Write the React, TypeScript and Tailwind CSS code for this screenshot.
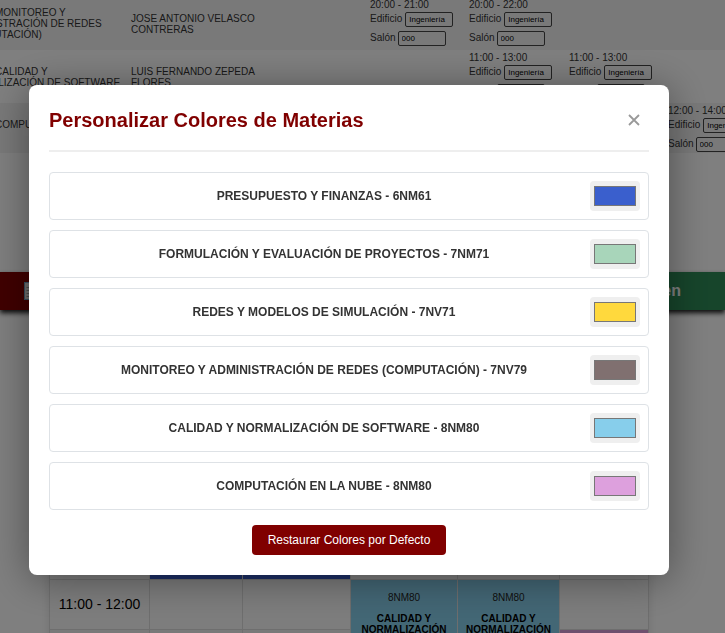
import { useState } from "react";

type Slot = { time: string } | null;

type Course = {
  title: string[];
  teacher: string;
  slots: Slot[];
};

const courses: Course[] = [
  {
    title: ["MONITOREO Y", "ADMINISTRACIÓN DE REDES", "(COMPUTACIÓN)"],
    teacher: "JOSE ANTONIO VELASCO CONTRERAS",
    slots: [{ time: "20:00 - 21:00" }, { time: "20:00 - 22:00" }, null, null],
  },
  {
    title: ["CALIDAD Y", "NORMALIZACIÓN DE SOFTWARE"],
    teacher: "LUIS FERNANDO ZEPEDA FLORES",
    slots: [null, { time: "11:00 - 13:00" }, { time: "11:00 - 13:00" }, null],
  },
  {
    title: ["COMPUTACIÓN EN LA NUBE"],
    teacher: "",
    slots: [null, null, null, { time: "12:00 - 14:00" }],
  },
];

const subjects = [
  { name: "PRESUPUESTO Y FINANZAS - 6NM61", color: "#3a5fcd" },
  { name: "FORMULACIÓN Y EVALUACIÓN DE PROYECTOS - 7NM71", color: "#a8d5ba" },
  { name: "REDES Y MODELOS DE SIMULACIÓN - 7NV71", color: "#ffd93d" },
  { name: "MONITOREO Y ADMINISTRACIÓN DE REDES (COMPUTACIÓN) - 7NV79", color: "#807070" },
  { name: "CALIDAD Y NORMALIZACIÓN DE SOFTWARE - 8NM80", color: "#87ceeb" },
  { name: "COMPUTACIÓN EN LA NUBE - 8NM80", color: "#dda0dd" },
];

function SlotCell({ slot }: { slot: Slot }) {
  if (!slot) return <td />;
  const field = "h-[15px] w-12 rounded-xs border border-[#444] px-[3px] text-[8px] text-black";
  return (
    <td className="p-0 pt-px align-top">
      <div className="h-[14px] leading-[14px]">{slot.time}</div>
      <label className="flex h-[15px] items-start gap-[3px] leading-[13px] whitespace-nowrap">
        Edificio
        <input className={field} defaultValue="Ingeniería" />
      </label>
      <label className="mt-1 flex h-[15px] items-start gap-0.5 leading-[13px] whitespace-nowrap">
        Salón
        <input className={field} defaultValue="000" />
      </label>
    </td>
  );
}

function CourseTable() {
  return (
    <table className="-mt-[3px] -ml-[39px] w-[907px] table-fixed border-collapse text-[10px] leading-[11px] text-[#333]">
      <colgroup>
        <col className="w-[170px]" />
        <col className="w-[239px]" />
        <col className="w-[99px]" />
        <col className="w-[100px]" />
        <col className="w-[99px]" />
        <col />
      </colgroup>
      <tbody>
        {courses.map((course, i) => (
          <tr
            key={i}
            className={
              i === 2 ? "h-[50px] bg-[#f2f2f2]" : i === 0 ? "h-[53px] bg-[#f2f2f2]" : "h-[53px]"
            }
          >
            <td className={`p-0 indent-[34px] whitespace-nowrap ${i === 2 ? "pt-4 align-top" : ""}`}>
              {course.title.map((line, n) => (
                <div key={line} className={n === 0 ? "" : "indent-0"}>
                  {line}
                </div>
              ))}
            </td>
            <td className="p-0 pr-[110px]">{course.teacher}</td>
            {course.slots.map((slot, n) => (
              <SlotCell key={n} slot={slot} />
            ))}
          </tr>
        ))}
      </tbody>
    </table>
  );
}

function WeekTable() {
  const cell = "border border-[#ddd] p-0";
  const classCell = "border border-[#ddd] bg-[#87ceeb] p-0 pt-3 align-top text-[10px] leading-[11px] text-[#222]";
  return (
    <table className="mt-[219px] ml-[49px] w-[600px] table-fixed border-collapse bg-[#fafafa] text-center shadow-[0_0_10px_rgba(0,0,0,0.1)]">
      <colgroup>
        <col className="w-[100px]" />
        <col className="w-[93px]" />
        <col className="w-[108px]" />
        <col className="w-[107px]" />
        <col className="w-[102px]" />
        <col />
      </colgroup>
      <tbody>
        <tr className="h-[50px]">
          <td className={cell} />
          <td className="border border-[#ddd] bg-[#3a5fcd]" />
          <td className="border border-[#ddd] bg-[#3a5fcd]" />
          <td className={cell} />
          <td className={cell} />
          <td className={cell} />
        </tr>
        <tr className="h-[50px]">
          <td className="border border-[#ddd] p-0 text-[14px]">11:00 - 12:00</td>
          <td className={cell} />
          <td className={cell} />
          {[0, 1].map((n) => (
            <td key={n} rowSpan={2} className={classCell}>
              <div>8NM80</div>
              <div className="mt-2.5 font-bold text-black">
                CALIDAD Y
                <br />
                NORMALIZACIÓN
              </div>
            </td>
          ))}
          <td className={cell} />
        </tr>
        <tr className="h-[50px] bg-[#f2f2f2]">
          <td className={cell} />
          <td className={cell} />
          <td className={cell} />
          <td className="border border-[#ddd] bg-[#dda0dd]" />
        </tr>
      </tbody>
    </table>
  );
}

function ClipboardIcon() {
  return (
    <svg width="16" height="18" viewBox="0 0 16 18" aria-hidden="true">
      <rect x="0.5" y="0.5" width="15" height="17" fill="#e0e0e0" stroke="#6f9fc0" />
      <path d="M2.5 5.5h11M2.5 8.5h11M2.5 11.5h11M2.5 14.5h11" stroke="#9a9a9a" />
    </svg>
  );
}

function ColorDialog() {
  const [colors, setColors] = useState(subjects.map((s) => s.color));
  return (
    <div className="fixed inset-0 flex items-start justify-center bg-black/50 pt-[85px] pr-[27px]">
      <section
        role="dialog"
        aria-labelledby="dialog-title"
        className="w-full max-w-[640px] rounded-lg bg-white p-5 shadow-[0_4px_40px_rgba(0,0,0,0.4)]"
      >
        <header className="flex h-[47px] items-start justify-between border-b-2 border-[#eee]">
          <h2 id="dialog-title" className="text-xl leading-[30px] font-bold text-[#800000]">
            Personalizar Colores de Materias
          </h2>
          <button
            aria-label="Cerrar"
            className="flex size-[30px] items-center justify-center text-[#999]"
          >
            <svg width="12" height="12" viewBox="0 0 12 12" aria-hidden="true">
              <path d="M1 1l10 10M11 1L1 11" stroke="currentColor" strokeWidth="1.8" />
            </svg>
          </button>
        </header>
        <ul className="mt-5 flex flex-col gap-2.5">
          {subjects.map((subject, i) => (
            <li key={subject.name} className="flex items-center rounded border border-[#dee2e6] p-2">
              <label htmlFor={`color-${i}`} className="flex-1 text-center text-xs font-bold text-[#333]">
                {subject.name}
              </label>
              <input
                id={`color-${i}`}
                type="color"
                value={colors[i]}
                onChange={(e) => setColors(colors.map((c, n) => (n === i ? e.target.value : c)))}
                className="h-[30px] w-[50px] cursor-pointer rounded bg-[#efefef] px-0.5 py-px"
              />
            </li>
          ))}
        </ul>
        <div className="mt-[15px] flex justify-center">
          <button
            onClick={() => setColors(subjects.map((s) => s.color))}
            className="h-[30px] rounded bg-[#800000] px-4 text-xs text-white"
          >
            Restaurar Colores por Defecto
          </button>
        </div>
      </section>
    </div>
  );
}

export default function App() {
  return (
    <div className="h-screen overflow-hidden bg-white font-['Liberation_Sans',Arial,sans-serif]">
      <main className="flow-root">
        <CourseTable />
        <div className="mt-[119px] flex h-[38px] shadow-[0_3px_5px_rgba(0,0,0,0.9)]">
          <button className="flex flex-1 items-center bg-[#800000] pl-6" aria-label="Horario">
            <ClipboardIcon />
          </button>
          <button className="flex-1 bg-[#2e8b57] pr-11 text-right text-base font-bold text-white">Imagen</button>
        </div>
        <WeekTable />
      </main>
      <ColorDialog />
    </div>
  );
}
